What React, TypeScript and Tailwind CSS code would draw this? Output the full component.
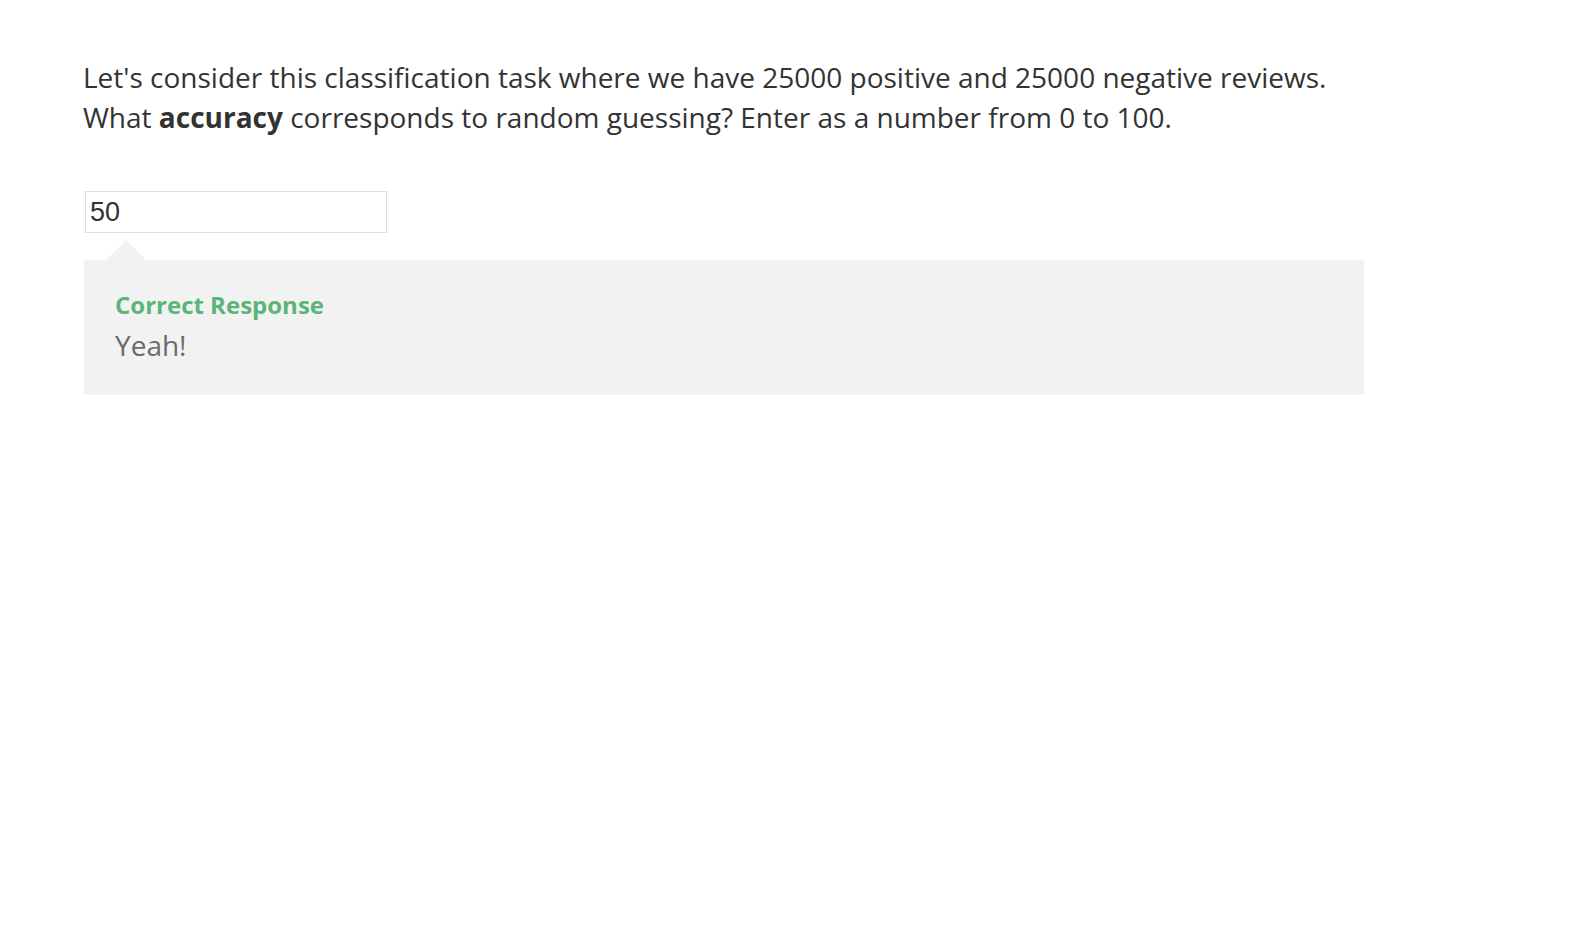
import React from "react";

export default function App() {
  return (
    <div className="min-h-[928px] bg-white pl-[84px] pt-[57px]" style={{ fontFamily: '"Open Sans", sans-serif' }}>
      <p className="-ml-px text-[28px] leading-[40px] text-[#333333]">
        Let's consider this classification task where we have 25000 positive and 25000 negative reviews.
        <br />
        What <strong className="font-bold">accuracy</strong> corresponds to random guessing? Enter as a number from 0 to 100.
      </p>
      <div className="mt-[54px]">
        <input
          readOnly
          value="50"
          className="ml-px box-border h-[42px] w-[302px] border border-[#dddddd] bg-white px-[4px] pt-px text-[27px] text-[#333333] outline-none"
          style={{ fontFamily: '"Liberation Sans", Arial, sans-serif' }}
        />
      </div>
      <div className="relative mt-[27px] w-[1280px] bg-[#f2f2f2] px-[31px] pb-[28px] pt-[28px]">
        <div className="absolute -top-[20px] left-[22px] h-0 w-0 border-x-[20px] border-b-[20px] border-x-transparent border-b-[#f2f2f2]" />
        <div className="text-[24px] font-bold leading-[34px] text-[#5ab579]">Correct Response</div>
        <div className="pt-px text-[28px] leading-[44px] text-[#6b6b6b]">Yeah!</div>
      </div>
    </div>
  );
}
